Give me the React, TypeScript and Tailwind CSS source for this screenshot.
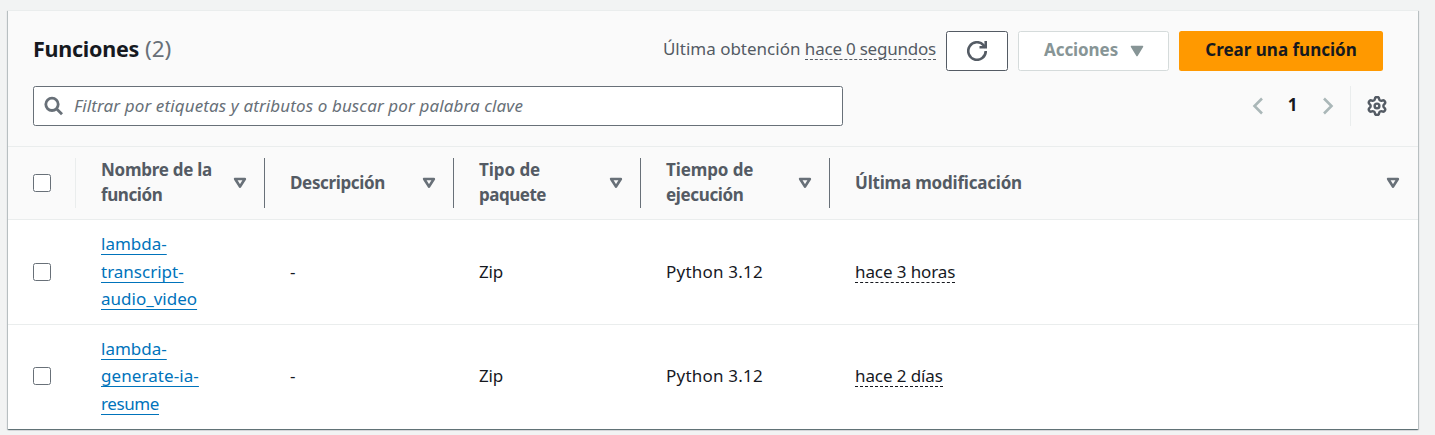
const SORT_COLOR = "#687078";

function SortIcon() {
  return (
    <svg width="14" height="12" viewBox="0 0 14 12" className="shrink-0">
      <path d="M2.200 2h9.600L7 9.600z" fill="none" stroke={SORT_COLOR} strokeWidth="2.700" strokeLinejoin="round" />
    </svg>
  );
}

function Checkbox() {
  return <span className="block h-[17.5px] w-[17.5px] rounded-[2.5px] border border-[#687078] bg-white" />;
}

const columns = [
  { lines: [{ text: "Nombre de la", cls: "tracking-[-0.26px]" }, { text: "función", cls: "tracking-[-0.4px]" }] },
  { lines: [{ text: "Descripción", cls: "tracking-[-0.35px]" }] },
  { lines: [{ text: "Tipo de", cls: "tracking-[-0.05px]" }, { text: "paquete", cls: "tracking-[-0.48px]" }] },
  { lines: [{ text: "Tiempo de", cls: "tracking-[-0.1px]" }, { text: "ejecución", cls: "tracking-[-0.35px]" }] },
  { lines: [{ text: "Última modificación", cls: "tracking-[-0.2px]" }] },
];

const rows = [
  {
    name: [
      { text: "lambda-", cls: "" },
      { text: "transcript-", cls: "" },
      { text: "audio_video", cls: "" },
    ],
    modified: "hace 3 horas",
  },
  {
    name: [
      { text: "lambda-", cls: "" },
      { text: "generate-ia-", cls: "tracking-[0.08px]" },
      { text: "resume", cls: "tracking-[-0.4px]" },
    ],
    modified: "hace 2 días",
  },
];

const GRID = "grid grid-cols-[68px_189px_189px_187px_189px_1fr]";

export default function App() {
  return (
    <div className="h-[435px] overflow-hidden bg-[#f2f3f3] px-2 pt-[10px] font-['Noto_Sans',sans-serif] text-[17px] text-[#16191f]">
      <div className="flex h-[419px] w-[1410px] flex-col border-t border-[#eaeded] bg-white shadow-[0_1px_1px_0_rgba(0,28,36,0.4),1px_1px_1px_0_rgba(0,28,36,0.18),-1px_1px_1px_0_rgba(0,28,36,0.18)]">
        <div className="h-[136px] border-b border-[#eaeded] bg-[#fafafa] pl-[25px] pr-[35px] pt-5">
          <div className="flex h-10 items-center">
            <h1 className="-mt-[5px] flex-1 text-[22.5px] leading-7">
              <span className="text-[21.5px] font-bold tracking-[-0.25px]">Funciones</span>{" "}
              <span className="text-[#687078]">(2)</span>
            </h1>
            <div className="-mt-[4px] mr-[10px] text-[#545b64]">
              Última obtención{" "}
              <span className="inline-block border-b border-dashed border-[#545b64] leading-[21px] tracking-[-0.22px]">
                hace 0 segundos
              </span>
            </div>
            <button className="mr-[10px] flex h-10 w-[62px] items-center justify-center rounded-[2.5px] border border-[#545b64] bg-white">
              <svg width="20" height="20" viewBox="0 0 16 16" fill="none" stroke="#545b64" strokeWidth="2.100">
                <path d="M10 5h5V0" />
                <path d="M15 8a7 7 0 1 1-1.800-4.700L15 5" />
              </svg>
            </button>
            <button className="mr-[10px] flex h-10 w-[151px] items-center rounded-[2.5px] border border-[#d5dbdb] bg-white pl-[25px] font-bold text-[#879596]">
              <span className="-mt-[3px] tracking-[-0.08px]">Acciones</span>
              <svg width="14" height="12" viewBox="0 0 14 12" className="ml-[12px]">
                <path d="M1.500 1.500h11L7 10.500z" fill="#879596" stroke="#879596" strokeWidth="1.500" strokeLinejoin="round" />
              </svg>
            </button>
            <button className="flex h-10 w-[204px] items-center justify-center rounded-[2.5px] bg-[#ff9900] font-bold">
              <span className="-mt-[3px]">Crear una función</span>
            </button>
          </div>
          <div className="mt-[15px] flex h-10 items-center">
            <div className="flex h-10 w-[810px] items-center rounded-[2.5px] border border-[#687078] bg-white pl-[10px]">
              <svg width="20" height="20" viewBox="0 0 20 20" fill="none" stroke="#687078" strokeWidth="2.800">
                <circle cx="8" cy="8.300" r="6.200" />
                <path d="M12.500 12.800l5.500 5.500" />
              </svg>
              <span className="-mt-px ml-[10px] whitespace-nowrap italic tracking-[0.12px] text-[#687078]">
                Filtrar por etiquetas y atributos o buscar por palabra clave
              </span>
            </div>
            <div className="ml-auto mr-[-4px] flex h-10 items-center">
              <svg width="12" height="18" viewBox="0 0 12 18" fill="none" stroke="#aab7b8" strokeWidth="2.600">
                <path d="M10 1.500L2.500 9l7.500 7.500" />
              </svg>
              <span className="-mt-[3px] w-[58px] pr-px text-center font-bold">1</span>
              <svg width="12" height="18" viewBox="0 0 12 18" fill="none" stroke="#aab7b8" strokeWidth="2.600">
                <path d="M2 1.500L9.500 9 2 16.500" />
              </svg>
              <span className="ml-4 mr-4 h-10 w-px bg-[#eaeded]" />
              <svg width="20" height="20" viewBox="1 1 22 22" fill="none" stroke="#545b64" strokeWidth="2.700" strokeLinejoin="round">
                <path d="M9.671 4.136a2.34 2.34 0 0 1 4.659 0 2.34 2.34 0 0 0 3.319 1.915 2.34 2.34 0 0 1 2.33 4.033 2.34 2.34 0 0 0 0 3.831 2.34 2.34 0 0 1-2.33 4.033 2.34 2.34 0 0 0-3.319 1.915 2.34 2.34 0 0 1-4.659 0 2.34 2.34 0 0 0-3.32-1.915 2.34 2.34 0 0 1-2.33-4.033 2.34 2.34 0 0 0 0-3.831A2.34 2.34 0 0 1 6.35 6.051a2.34 2.34 0 0 0 3.319-1.915" />
                <circle cx="12" cy="12" r="2.600" />
              </svg>
            </div>
          </div>
        </div>

        <div className={`${GRID} h-[73px] border-b border-[#eaeded] bg-[#fafafa] py-[11px]`}>
          <div className="flex items-center border-r border-[#eaeded] pl-[25px]">
            <Checkbox />
          </div>
          {columns.map((column, i) => (
            <div
              key={i}
              className={`flex items-center justify-between pl-[25px] font-bold leading-[25px] text-[#545b64] ${
                i < columns.length - 1 ? "border-r border-[#687078] pr-[17px]" : "pr-[18px]"
              }`}
            >
              <div className={column.lines.length > 1 ? "-mt-[3px]" : "-mt-px"}>
                {column.lines.map((line) => (
                  <div key={line.text} className={`whitespace-nowrap ${line.cls}`}>
                    {line.text}
                  </div>
                ))}
              </div>
              <SortIcon />
            </div>
          ))}
        </div>

        {rows.map((row, i) => (
          <div
            key={i}
            className={`${GRID} items-center leading-[27.5px] ${i === 0 ? "h-[105px] border-b border-[#eaeded]" : "h-[102px]"}`}
          >
            <div className="pl-[25px]">
              <Checkbox />
            </div>
            <div className={`pl-[25px] text-[#0073bb] ${i === 0 ? "-mt-px" : ""}`}>
              {row.name.map((part) => (
                <div key={part.text}>
                  <a
                    className={`underline decoration-1 underline-offset-[4px] [text-decoration-skip-ink:none] ${part.cls}`}
                  >
                    {part.text}
                  </a>
                </div>
              ))}
            </div>
            <div className="pl-[25px]">-</div>
            <div className="pl-[25px] tracking-[-0.2px]">Zip</div>
            <div className="pl-[25px] tracking-[0.22px]">Python 3.12</div>
            <div className="pl-[25px]">
              <span className="inline-block border-b border-dashed border-[#16191f] leading-[21px] tracking-[-0.1px]">
                {row.modified}
              </span>
            </div>
          </div>
        ))}
      </div>
    </div>
  );
}
